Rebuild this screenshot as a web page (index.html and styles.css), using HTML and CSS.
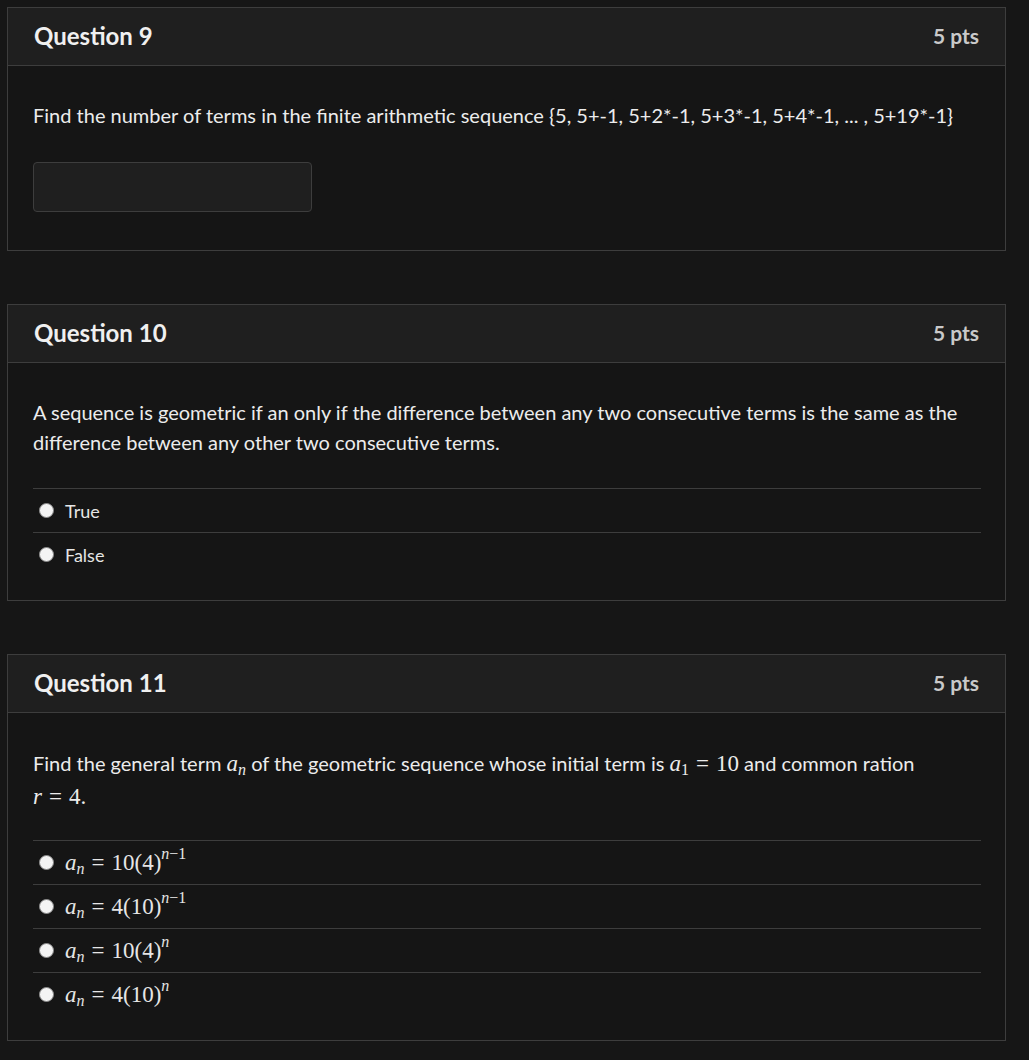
FILE: index.html
```html
<!DOCTYPE html>
<html lang="en">
<head>
  <meta charset="UTF-8">
  <title>Quiz</title>
  <link rel="stylesheet" href="styles.css">
</head>
<body>

<div class="question">
  <div class="question-header">
    <span class="question-name">Question 9</span>
    <span class="question-points">5 pts</span>
  </div>
  <div class="question-body">
    <p class="question-text">Find the number of terms in the finite arithmetic sequence {5, 5+-1, 5+2*-1, 5+3*-1, 5+4*-1, ... , 5+19*-1}</p>
    <input type="text" class="answer-input">
  </div>
</div>

<div class="question">
  <div class="question-header">
    <span class="question-name">Question 10</span>
    <span class="question-points">5 pts</span>
  </div>
  <div class="question-body">
    <p class="question-text">A sequence is geometric if an only if the difference between any two consecutive terms is the same as the difference between any other two consecutive terms.</p>
    <div class="answers">
      <label class="answer"><span class="radio"></span>True</label>
      <label class="answer"><span class="radio"></span>False</label>
    </div>
  </div>
</div>

<div class="question">
  <div class="question-header">
    <span class="question-name">Question 11</span>
    <span class="question-points">5 pts</span>
  </div>
  <div class="question-body">
    <p class="question-text math-text">Find the general term <span class="math"><i>a</i><sub><i>n</i></sub></span> of the geometric sequence whose initial term is <span class="math"><i>a</i><sub>1</sub><span class="op">=</span>10</span> and common ration<br><span class="math"><i>r</i><span class="op">=</span>4.</span></p>
    <div class="answers math-answers">
      <label class="answer"><span class="radio"></span><span class="math"><i>a</i><sub><i>n</i></sub><span class="op">=</span>10(4)<sup><i>n</i>−1</sup></span></label>
      <label class="answer"><span class="radio"></span><span class="math"><i>a</i><sub><i>n</i></sub><span class="op">=</span>4(10)<sup><i>n</i>−1</sup></span></label>
      <label class="answer"><span class="radio"></span><span class="math"><i>a</i><sub><i>n</i></sub><span class="op">=</span>10(4)<sup><i>n</i></sup></span></label>
      <label class="answer"><span class="radio"></span><span class="math"><i>a</i><sub><i>n</i></sub><span class="op">=</span>4(10)<sup><i>n</i></sup></span></label>
    </div>
  </div>
</div>

</body>
</html>
```

FILE: styles.css
```css
body {
  margin: 0;
  padding: 7px 23px 16px 7px;
  background: #161616;
  color: #ececec;
  font-family: Lato, "Open Sans", sans-serif;
}

.question {
  border: 1px solid #3d3d3d;
  background: #151515;
  margin-bottom: 53px;
}

.question:last-child {
  margin-bottom: 0;
}

.question-header {
  display: flex;
  justify-content: space-between;
  align-items: center;
  height: 57px;
  padding: 0 26px;
  background: #1f1f1f;
  border-bottom: 1px solid #3d3d3d;
}

.question-name {
  font-size: 24px;
  font-weight: bold;
  color: #f0f0f0;
  margin-top: -2px;
}

.question-points {
  font-size: 21px;
  font-weight: bold;
  color: #c9c9c9;
  margin-top: -2px;
}

.question-body {
  padding: 34px 24px 24px 25px;
}

.question-text {
  margin: 0;
  font-size: 20px;
  line-height: 30px;
}

.math-text {
  line-height: 32px;
}

.answer-input {
  display: block;
  width: 279px;
  height: 50px;
  box-sizing: border-box;
  margin: 32px 0 14px;
  background: #1f1f1f;
  border: 1px solid #3d3d3d;
  border-radius: 4px;
}

.answers {
  margin-top: 31px;
}

.math-answers {
  margin-top: 27px;
}

.answer {
  display: flex;
  align-items: center;
  height: 43px;
  border-top: 1px solid #3d3d3d;
  font-size: 18px;
  color: #e6e6e6;
}

.radio {
  width: 13px;
  height: 13px;
  margin: 0 11px 0 6px;
  border-radius: 50%;
  background: #f4f4f4;
  border: 1px solid #8a8a8a;
}

.math {
  font-family: "Liberation Serif", "DejaVu Serif", serif;
  font-size: 23px;
  white-space: nowrap;
}

.math sub,
.math sup {
  font-size: 16px;
  line-height: 0;
}

.math sup {
  vertical-align: 11px;
}

.math sub {
  vertical-align: -4px;
}

.op {
  margin: 0 7px;
}
```
